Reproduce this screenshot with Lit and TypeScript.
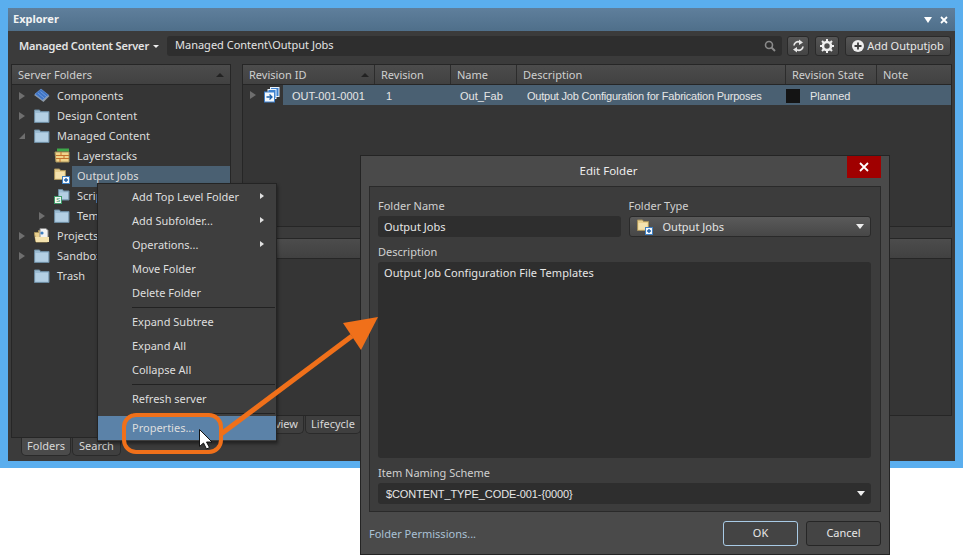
import { LitElement, css, html, svg } from 'lit'
import { customElement } from 'lit/decorators.js'

const icon = (body: unknown) =>
  html`<svg class="ico" viewBox="0 0 16 16" width="16" height="16">${body}</svg>`

const plusBadge = svg`
  <rect x="8.5" y="8.5" width="7" height="7" fill="#f4f8fc" stroke="#3f7fc0" />
  <path d="M10 12h4M12 10v4" stroke="#1d5fa8" stroke-width="1.4" />`

const blueFolder = icon(svg`
  <path d="M.5 3.5V2h5l1 1.5h8.5v11H.5z" fill="#9cbcd3" stroke="#6d8ba0" />
  <rect x="1.5" y="5" width="12.5" height="8.5" fill="#b3cfe3" />`)

const jobFolder = icon(svg`
  <path d="M.5 2.5V1h5l1 1.5h5v9H.5z" fill="#e8cf8e" stroke="#a8935c" />
  <rect x="1.5" y="4" width="9" height="6.5" fill="#f4e2ae" />
  ${plusBadge}`)

const scriptFolder = icon(svg`
  <path d="M4.5 3V1.500h4l1 1.500h5.500v9H4.500z" fill="#9cbcd3" stroke="#6d8ba0" />
  <rect x="5.500" y="4.500" width="8.500" height="6.500" fill="#b3cfe3" />
  <rect x=".5" y="8.500" width="7" height="7" fill="#f0f8f2" stroke="#3d9a68" />
  <text x="2.200" y="14.300" font-size="6" font-family="Liberation Sans" fill="#2e8a58">S</text>`)

const chipIcon = icon(svg`
  <path d="M0 7 7 1.500 15.500 8 9.500 14z" fill="#8f9aa5" />
  <path d="M1 6 7 1 14.500 7 8.500 12z" fill="#3f74c4" stroke="#6d9be0" stroke-width=".6" />
  <path d="M4 5l6 5M6.500 3.500l6 5" stroke="#8fb6ee" stroke-width=".6" />`)

const stackIcon = icon(svg`
  <rect x="3" y=".5" width="12" height="3" fill="#3fa84a" />
  <path d="M1 4h14v10H2z" fill="#f0d48a" stroke="#a8935c" />
  <path d="M2 7.500h13M2 10.500h13M7 4v3.500M10 7.500v3M6 10.500v3.500" stroke="#c4702c" />`)

const projectIcon = icon(svg`
  <path d="M.5 6V4.500h4v-2h9v11.500H2z" fill="#e8cf8e" stroke="#a8935c" />
  <path d="M6 .5h6l2 2v8H6z" fill="#f3f3f3" stroke="#8a8a8a" />
  <circle cx="8" cy="5" r="1.600" fill="#3f7fc0" />
  <path d="M1 9h14v5H2z" fill="#f4e2ae" />`)

const revisionIcon = icon(svg`
  <rect x="6.500" y=".5" width="8.500" height="9" fill="#3f82d0" stroke="#e8f2fc" />
  <rect x="4" y="2.500" width="8" height="9" fill="#3f82d0" stroke="#e8f2fc" />
  <rect x=".5" y="5" width="10" height="10" fill="#f4f8fc" stroke="#3f82d0" />
  <path d="M2.500 10h5.500M5.500 7.500 8 10l-2.500 2.500" fill="none" stroke="#1d5fa8" stroke-width="1.300" />`)

const caretDown = html`<svg class="caret" viewBox="0 0 8 5" width="8" height="5"><path d="M0 0h8L4 5z" fill="#eee" /></svg>`

@customElement('app-root')
export class AppRoot extends LitElement {
  private treeRow(label: string, ico: unknown, lvl: number, arrow = '', selected = false) {
    return html`
      <div class="tree-row lvl${lvl} ${selected ? 'selected' : ''}">
        <span class="arrow ${arrow}"></span>
        ${ico}
        <span class="tree-label">${label}</span>
      </div>
    `
  }

  private menuItem(label: string, sub = false, active = false) {
    return html`
      <div class="menu-item ${active ? 'active' : ''}">
        <span>${label}</span>
        ${sub ? html`<span class="sub"></span>` : ''}
      </div>
    `
  }

  render() {
    return html`
      <div class="frame">
        <div class="win">
          <div class="title">
            <span class="title-text">Explorer</span>
            <svg viewBox="0 0 8 6" width="8" height="6"><path d="M0 0h8L4 6z" fill="#fff" /></svg>
            <svg viewBox="0 0 8 8" width="8" height="8">
              <path d="M1 1l6 6M7 1 1 7" stroke="#fff" stroke-width="1.800" />
            </svg>
          </div>

          <div class="toolbar">
            <span class="server">Managed Content Server</span>
            <svg class="server-caret" viewBox="0 0 6 3" width="6" height="3"><path d="M0 0h6L3 3z" fill="#eee" /></svg>
            <div class="path">
              <span>Managed Content\\Output Jobs</span>
              <svg viewBox="0 0 12 12" width="12" height="12">
                <circle cx="5" cy="5" r="3.500" fill="none" stroke="#8a8a8a" stroke-width="1.600" />
                <path d="M7.500 7.500 11 11" stroke="#8a8a8a" stroke-width="2" />
              </svg>
            </div>
            <button class="tool sync">
              <svg viewBox="0 0 12 14" width="12" height="14">
                <path d="M2 6.500a4 4 0 0 1 6-3.200M11 7.500a4 4 0 0 1-6 3.200" fill="none" stroke="#e6e6e6" stroke-width="1.700" />
                <path d="M7 .5 11 3.500 7 6zM5 8l-4 2.500L5 13.500z" fill="#e6e6e6" />
              </svg>
            </button>
            <button class="tool gear">
              <svg viewBox="0 0 14 14" width="14" height="14">
                <circle cx="7" cy="7" r="4" fill="none" stroke="#eee" stroke-width="2.600" />
                <path d="M7 0v3M7 11v3M0 7h3M11 7h3M2 2l2 2M10 10l2 2M12 2l-2 2M4 10l-2 2" stroke="#eee" stroke-width="2" />
              </svg>
            </button>
            <button class="tool add">
              <svg viewBox="0 0 12 12" width="12" height="12">
                <circle cx="6" cy="6" r="6" fill="#eee" />
                <path d="M6 2.500v7M2.500 6h7" stroke="#3c3c3c" stroke-width="1.800" />
              </svg>
              <span>Add Outputjob</span>
            </button>
          </div>

          <div class="panes">
            <div class="left">
              <div class="box left-box">
                <div class="head">
                  <span>Server Folders</span>
                  <svg viewBox="0 0 8 4" width="8" height="4"><path d="M0 4h8L4 0z" fill="#222" /></svg>
                </div>
                <div class="tree">
                  ${this.treeRow('Components', chipIcon, 0, 'closed')}
                  ${this.treeRow('Design Content', blueFolder, 0, 'closed')}
                  ${this.treeRow('Managed Content', blueFolder, 0, 'open')}
                  ${this.treeRow('Layerstacks', stackIcon, 1)}
                  ${this.treeRow('Output Jobs', jobFolder, 1, '', true)}
                  ${this.treeRow('Scripts', scriptFolder, 1)}
                  ${this.treeRow('Templates', blueFolder, 1, 'closed')}
                  ${this.treeRow('Projects', projectIcon, 0, 'closed')}
                  ${this.treeRow('Sandbox', blueFolder, 0, 'closed')}
                  ${this.treeRow('Trash', blueFolder, 0)}
                </div>
              </div>
              <div class="tabs left-tabs">
                <span class="tab on">Folders</span>
                <span class="tab">Search</span>
              </div>
            </div>

            <div class="right">
              <div class="box grid-box">
                <div class="grid-head">
                  <span class="c1">Revision ID<svg viewBox="0 0 8 4" width="8" height="4"><path d="M0 4h8L4 0z" fill="#222" /></svg></span>
                  <span class="c2">Revision</span>
                  <span class="c3">Name</span>
                  <span class="c4">Description</span>
                  <span class="c5">Revision State</span>
                  <span class="c6">Note</span>
                </div>
                <div class="grid-row">
                  <span class="row-lead"><span class="arrow closed"></span>${revisionIcon}</span>
                  <div class="row-cells">
                    <span class="d1">OUT-001-0001</span>
                    <span class="d2">1</span>
                    <span class="d3">Out_Fab</span>
                    <span class="d4">Output Job Configuration for Fabrication Purposes</span>
                    <span class="d5"><i class="swatch"></i>Planned</span>
                  </div>
                </div>
              </div>
              <div class="box lower-box"><div class="lower-head"></div></div>
              <div class="tabs right-tabs">
                <span class="tab">Overview</span>
                <span class="tab">Lifecycle</span>
              </div>
            </div>
          </div>
        </div>
      </div>

      <div class="menu">
        ${this.menuItem('Add Top Level Folder', true)}
        ${this.menuItem('Add Subfolder...', true)}
        ${this.menuItem('Operations...', true)}
        ${this.menuItem('Move Folder')}
        ${this.menuItem('Delete Folder')}
        <div class="sep"></div>
        ${this.menuItem('Expand Subtree')}
        ${this.menuItem('Expand All')}
        ${this.menuItem('Collapse All')}
        <div class="sep"></div>
        ${this.menuItem('Refresh server')}
        <div class="sep"></div>
        ${this.menuItem('Properties...', false, true)}
      </div>

      <div class="dialog">
        <div class="dlg-title">
          <span>Edit Folder</span>
          <div class="close">
            <svg viewBox="0 0 10 10" width="10" height="10">
              <path d="M1 1l8 8M9 1 1 9" stroke="#fff" stroke-width="1.800" />
            </svg>
          </div>
        </div>
        <div class="dlg-panel">
          <div class="two">
            <label class="field">
              <span class="lab">Folder Name</span>
              <div class="input">Output Jobs</div>
            </label>
            <label class="field">
              <span class="lab">Folder Type</span>
              <div class="select">${jobFolder}<span class="sel-text">Output Jobs</span>${caretDown}</div>
            </label>
          </div>
          <span class="lab">Description</span>
          <div class="area">Output Job Configuration File Templates</div>
          <span class="lab scheme-lab">Item Naming Scheme</span>
          <div class="input scheme"><span>$CONTENT_TYPE_CODE-001-{0000}</span>${caretDown}</div>
        </div>
        <div class="dlg-foot">
          <span class="link">Folder Permissions...</span>
          <button class="btn ok">OK</button>
          <button class="btn">Cancel</button>
        </div>
      </div>

      <svg class="overlay" viewBox="0 0 963 555" width="963" height="555">
        <rect x="124" y="415" width="97" height="37" rx="12" fill="none" stroke="#f0701a" stroke-width="4" />
        <path d="M221 434 352 336" stroke="#f0701a" stroke-width="5" fill="none" />
        <path d="M378 317 343 323 361 350z" fill="#f0701a" />
        <path d="M199.500 429.500v17l4-3.500 3 6 3-1.500-3-5.500h5.500z" fill="#fff" stroke="#111" stroke-width="1" />
      </svg>
    `
  }

  static styles = css`
    :host {
      display: block;
      position: relative;
      width: 963px;
      height: 555px;
      overflow: hidden;
      background: #fff;
      color: #e4e4e4;
      font-family: 'Noto Sans', sans-serif;
      font-size: 11px;
    }
    * {
      box-sizing: border-box;
    }
    .frame {
      height: 468px;
      padding: 8px 8px 7px 8px;
      background: #5aaeee;
    }
    .win {
      display: flex;
      flex-direction: column;
      height: 100%;
      background: #3b3b3b;
    }
    .title {
      display: flex;
      align-items: center;
      gap: 8px;
      height: 23px;
      flex: none;
      padding: 0 7px 0 5px;
      background: linear-gradient(#5f7f9c, #4f6f8a);
    }
    .title-text {
      flex: 1;
      padding-bottom: 2px;
      font-weight: 700;
      color: #f2f2f2;
    }
    .toolbar {
      display: flex;
      align-items: center;
      height: 33px;
      flex: none;
      padding: 0 4px 3px 11px;
    }
    .server {
      flex: none;
      width: 130px;
      padding-bottom: 2px;
      font-weight: 600;
      letter-spacing: -0.17px;
      white-space: nowrap;
    }
    .server-caret {
      flex: none;
      margin: 0 8px 0 4px;
    }
    .path {
      display: flex;
      align-items: center;
      justify-content: space-between;
      flex: none;
      width: 615px;
      height: 20px;
      padding: 0 6px 0 8px;
      border-radius: 3px;
      background: #2e2e2e;
    }
    .path span {
      padding-bottom: 3px;
    }
    .tool {
      display: flex;
      align-items: center;
      justify-content: center;
      flex: none;
      height: 20px;
      padding: 0;
      border: 1px solid #2a2a2a;
      border-radius: 3px;
      background: linear-gradient(#565656, #444);
      color: #e8e8e8;
      font: inherit;
    }
    .sync {
      width: 22px;
      margin-left: 5px;
    }
    .gear {
      width: 24px;
      margin-left: 6px;
    }
    .add {
      width: 106px;
      margin-left: 6px;
      gap: 3px;
    }
    .add span {
      padding-bottom: 2px;
    }
    .panes {
      display: flex;
      flex: 1;
      gap: 11px;
      min-height: 0;
      padding: 0 3px 5px 3px;
    }
    .left {
      display: flex;
      flex-direction: column;
      width: 220px;
      flex: none;
    }
    .right {
      display: flex;
      flex-direction: column;
      flex: 1;
      min-width: 0;
    }
    .box {
      border: 1px solid #262626;
      background: #353535;
    }
    .left-box {
      flex: 1;
      min-height: 0;
    }
    .head {
      display: flex;
      align-items: center;
      justify-content: space-between;
      height: 20px;
      padding: 0 6px;
      border-bottom: 1px solid #262626;
      background: linear-gradient(#4c4c4c, #414141);
      color: #cfcfcf;
    }
    .tree {
      padding-top: 1px;
    }
    .tree-row {
      display: flex;
      align-items: center;
      height: 20px;
      color: #dcdcdc;
    }
    .lvl0 {
      padding-left: 7px;
    }
    .lvl1 {
      padding-left: 27px;
    }
    .arrow {
      width: 6px;
      height: 8px;
      margin-right: 9px;
      flex: none;
    }
    .arrow.closed {
      border-left: 6px solid #6e6e6e;
      border-top: 4px solid transparent;
      border-bottom: 4px solid transparent;
    }
    .arrow.open {
      border-right: 6px solid #6e6e6e;
      border-top: 6px solid transparent;
      height: 6px;
    }
    .tree-label {
      margin-left: 7px;
      padding-bottom: 2px;
      white-space: nowrap;
    }
    .selected .tree-label {
      flex: 1;
      height: 21px;
      line-height: 19px;
      margin-left: 2px;
      padding-left: 5px;
      background: #4a6072;
    }
    .ico {
      flex: none;
    }
    .tabs {
      display: flex;
      flex: none;
      height: 18px;
    }
    .left-tabs {
      padding-left: 10px;
    }
    .right-tabs {
      margin-bottom: 22px;
    }
    .tab {
      display: flex;
      align-items: center;
      justify-content: center;
      height: 18px;
      padding: 0 6px 2px 6px;
      margin-right: 1px;
      border: 1px solid #2a2a2a;
      border-top: none;
      border-radius: 0 0 5px 5px;
      background: #3f3f3f;
      color: #d8d8d8;
    }
    .tab.on {
      background: #4b4b4b;
      width: 50px;
    }
    .right-tabs .tab {
      width: 56px;
    }
    .right-tabs .tab:first-child {
      width: 62px;
      padding-left: 8px;
    }
    .grid-box {
      height: 163px;
      flex: none;
    }
    .grid-head {
      display: flex;
      height: 20px;
      border-bottom: 1px solid #262626;
      background: linear-gradient(#4c4c4c, #414141);
      color: #cfcfcf;
    }
    .grid-head span {
      display: flex;
      align-items: center;
      justify-content: space-between;
      padding-left: 6px;
      border-right: 1px solid #2c2c2c;
      white-space: nowrap;
    }
    .grid-head svg {
      margin-right: 5px;
    }
    .c1 { width: 132px; }
    .c2 { width: 76px; }
    .c3 { width: 66px; }
    .c4 { width: 269px; }
    .c5 { width: 91px; }
    .c6 { flex: 1; border-right: none !important; }
    .grid-row {
      display: flex;
      height: 20px;
      font-family: 'Liberation Sans', sans-serif;
      font-size: 11px;
    }
    .row-lead {
      display: flex;
      align-items: center;
      width: 40px;
      flex: none;
      padding-left: 7px;
    }
    .row-lead .arrow {
      margin-right: 8px;
    }
    .row-cells {
      display: flex;
      align-items: center;
      flex: 1;
      padding-top: 1px;
      background: #4a6072;
      color: #e6e6e6;
      white-space: nowrap;
    }
    .row-cells span {
      display: flex;
      align-items: center;
    }
    .d1 { width: 103px; padding-left: 9px; }
    .d2 { width: 74px; }
    .d3 { width: 67px; }
    .d4 { width: 259px; letter-spacing: -0.22px; }
    .swatch {
      width: 14px;
      height: 14px;
      margin-right: 10px;
      background: #141414;
    }
    .lower-box {
      flex: 1;
      min-height: 0;
      margin-top: 11px;
    }
    .lower-head {
      height: 20px;
      border-bottom: 1px solid #262626;
      background: linear-gradient(#4c4c4c, #414141);
    }
    .menu {
      position: absolute;
      left: 97px;
      top: 183px;
      width: 180px;
      height: 259px;
      padding: 1px 0;
      border: 1px solid #242424;
      background: #3e3e3e;
      box-shadow: 1px 2px 3px rgba(0, 0, 0, 0.4);
    }
    .menu-item {
      display: flex;
      align-items: center;
      justify-content: space-between;
      height: 24px;
      padding: 0 12px 2px 34px;
      color: #dedede;
    }
    .menu-item.active {
      background: #5b82a8;
    }
    .sub {
      border-left: 4px solid #e0e0e0;
      border-top: 3.500px solid transparent;
      border-bottom: 3.500px solid transparent;
    }
    .sep {
      height: 1px;
      margin: 2px 1px 2px 34px;
      background: #222;
    }
    .dialog {
      position: absolute;
      left: 360px;
      top: 155px;
      display: flex;
      flex-direction: column;
      width: 530px;
      height: 400px;
      border: 1px solid #242424;
      background: #4a4a4a;
    }
    .dlg-title {
      position: relative;
      display: flex;
      align-items: center;
      justify-content: center;
      height: 30px;
      flex: none;
      padding: 0 33px 2px 0;
      color: #ececec;
      font-size: 11.5px;
    }
    .close {
      position: absolute;
      right: 8px;
      top: 0;
      display: flex;
      align-items: center;
      justify-content: center;
      width: 34px;
      height: 22px;
      background: #a00000;
    }
    .dlg-panel {
      display: flex;
      flex-direction: column;
      height: 326px;
      flex: none;
      margin: 0 8px;
      padding: 10px 9px 7px 8px;
      border: 1px solid #2a2a2a;
      background: #3c3c3c;
    }
    .two {
      display: flex;
      gap: 8px;
    }
    .field {
      display: flex;
      flex-direction: column;
      flex: 1;
    }
    .lab {
      height: 19px;
      padding-top: 1px;
      line-height: 15px;
      color: #d0d0d0;
    }
    .scheme-lab {
      padding-top: 0;
    }
    .input {
      display: flex;
      align-items: center;
      justify-content: space-between;
      height: 21px;
      padding: 0 6px;
      border-radius: 3px;
      background: #2e2e2e;
      color: #e6e6e6;
    }
    .two + .lab {
      margin-top: 6px;
    }
    .select {
      display: flex;
      align-items: center;
      height: 21px;
      padding: 0 6px 0 7px;
      border: 1px solid #2a2a2a;
      border-radius: 3px;
      background: linear-gradient(#5a5a5a, #474747);
    }
    .sel-text {
      flex: 1;
      margin-left: 10px;
    }
    .area {
      height: 196px;
      padding: 3px 6px;
      border-radius: 3px;
      background: #2e2e2e;
      color: #e6e6e6;
      letter-spacing: 0.08px;
      margin-bottom: 7px;
    }
    .scheme {
      margin-top: -1px;
    }
    .scheme span {
      padding-left: 2px;
      font-family: 'Liberation Sans', sans-serif;
      font-size: 11px;
      letter-spacing: -0.1px;
    }
    .dlg-foot {
      display: flex;
      align-items: center;
      gap: 8px;
      flex: 1;
      padding: 1px 8px 0 8px;
    }
    .link {
      flex: 1;
      color: #a9c1d6;
    }
    .btn {
      width: 75px;
      height: 25px;
      padding: 0 0 2px 0;
      border: 1px solid #262626;
      border-radius: 3px;
      background: #444;
      color: #e8e8e8;
      font: inherit;
    }
    .btn.ok {
      border-color: #a9cbe6;
    }
    .overlay {
      position: absolute;
      left: 0;
      top: 0;
      pointer-events: none;
    }
  `
}

declare global {
  interface HTMLElementTagNameMap {
    'app-root': AppRoot
  }
}
